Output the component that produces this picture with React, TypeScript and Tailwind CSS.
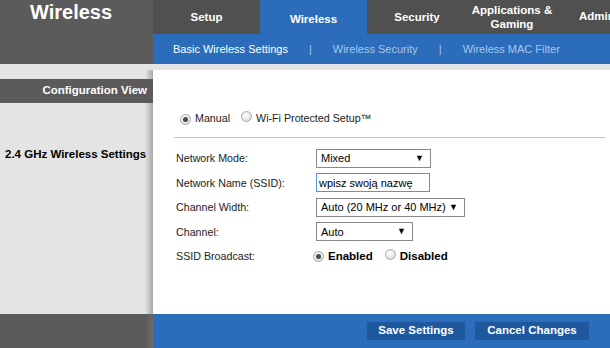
const Radio = ({ checked }: { checked?: boolean }) => (
  <span className="relative inline-flex h-[11px] w-[11px] items-center justify-center rounded-full border border-[#a9a9a9] bg-[radial-gradient(circle_at_40%_35%,#ffffff,#d4d4d4)]">
    {checked && <span className="h-[5px] w-[5px] rounded-full bg-[#4a4a4a]" />}
  </span>
);

const Select = ({ value, width }: { value: string; width: string }) => (
  <div
    className={`flex h-[19px] items-center justify-between whitespace-nowrap border border-[#8a8a8a] bg-white pl-[4px] pr-[6px] text-[11px] text-black ${width}`}
  >
    <span>{value}</span>
    <span className="text-[9px]">▼</span>
  </div>
);

const tabs = [
  { label: "Setup", w: "w-[107px]" },
  { label: "Wireless", w: "w-[107px]", active: true },
  { label: "Security", w: "w-[100px]" },
  { label: "Applications &\nGaming", w: "w-[108px] pr-[18px]" },
];

const App = () => {
  return (
    <div className="flex h-[348px] w-[610px] flex-col overflow-hidden bg-white font-['Liberation_Sans',Arial,sans-serif]">
      {/* header */}
      <div className="flex h-[64px] bg-[#5b5b5b]">
        <div className="w-[153px] shrink-0 pl-[30px] text-[20px] font-bold leading-[24px] text-white">
          Wireless
        </div>
        <div className="flex flex-1 flex-col overflow-hidden">
          <div className="flex h-[34px]">
            {tabs.map((t) => (
              <div
                key={t.label}
                className={`flex shrink-0 items-center justify-center whitespace-pre-line text-center text-[11.5px] font-bold leading-[14px] text-white ${t.w} ${
                  t.active ? "bg-[#2b6dbb] pt-[3px]" : "bg-[#505050]"
                }`}
              >
                {t.label}
              </div>
            ))}
            <div className="flex flex-1 items-center whitespace-nowrap bg-[#505050] pl-[4px] text-[11.5px] font-bold text-white">
              Admin
            </div>
          </div>
          <div className="flex h-[30px] items-center gap-[21px] bg-[#2b6dbb] pl-[20px] text-[11px] text-[#a9c6ec]">
            <span className="text-white">Basic Wireless Settings</span>
            <span>|</span>
            <span>Wireless Security</span>
            <span>|</span>
            <span>Wireless MAC Filter</span>
          </div>
        </div>
      </div>
      <div className="h-[6px] bg-[#e4e4e4]" />

      {/* main */}
      <div className="flex h-[244px]">
        <div className="w-[153px] shrink-0 bg-[linear-gradient(to_right,#e4e4e4_145px,#a8a8a8_153px)]">
          <div className="mt-[9px] flex h-[24px] items-center justify-end bg-[#5b5b5b] pr-[6px] text-[11.5px] font-bold text-white">
            Configuration View
          </div>
          <div className="mt-[43px] pl-[5px] text-[11.5px] font-bold text-black">
            2.4 GHz Wireless Settings
          </div>
        </div>
        <div className="flex-1 pl-[21px] pr-[5px] pt-[40px] text-[10.7px] text-[#222]">
          <div className="flex h-[16px] items-center">
            <span className="ml-[6px]"><Radio checked /></span>
            <span className="ml-[4px]">Manual</span>
            <span className="ml-[11px]"><Radio /></span>
            <span className="ml-[4px]">Wi-Fi Protected Setup™</span>
          </div>
          <div className="mt-[11px] h-px bg-[#c4c4c4]" />
          <div className="mt-[8px] flex flex-col pl-[2px]">
            <div className="flex h-[24.5px] items-center">
              <span className="w-[140px]">Network Mode:</span>
              <Select value="Mixed" width="w-[115px]" />
            </div>
            <div className="flex h-[24.5px] items-center">
              <span className="w-[140px]">Network Name (SSID):</span>
              <div className="flex h-[19px] w-[114px] items-center border border-[#5c93d6] bg-white pl-[2px] text-[11px] text-black">
                wpisz swoją nazwę
              </div>
            </div>
            <div className="flex h-[24.5px] items-center">
              <span className="w-[140px]">Channel Width:</span>
              <Select value="Auto (20 MHz or 40 MHz)" width="w-[149px]" />
            </div>
            <div className="flex h-[24.5px] items-center">
              <span className="w-[140px]">Channel:</span>
              <Select value="Auto" width="w-[97px]" />
            </div>
            <div className="flex h-[24.5px] items-center">
              <span className="w-[137px]">SSID Broadcast:</span>
              <Radio checked />
              <span className="ml-[4px] text-[11.5px] font-bold text-black">Enabled</span>
              <span className="ml-[12px]"><Radio /></span>
              <span className="ml-[4px] text-[11.5px] font-bold text-black">Disabled</span>
            </div>
          </div>
        </div>
      </div>

      {/* footer */}
      <div className="flex h-[34px]">
        <div className="w-[153px] shrink-0 bg-[linear-gradient(to_right,#5b5b5b_145px,#6e6a66_153px)]" />
        <div className="flex flex-1 items-center justify-end gap-[10px] bg-[#2b6dbb] pr-[21px] text-[11.5px] font-bold text-white">
          <button className="h-[18px] w-[98px] bg-[#1e599f]">Save Settings</button>
          <button className="h-[18px] w-[114px] bg-[#1e599f]">Cancel Changes</button>
        </div>
      </div>
    </div>
  );
};

export default App;
